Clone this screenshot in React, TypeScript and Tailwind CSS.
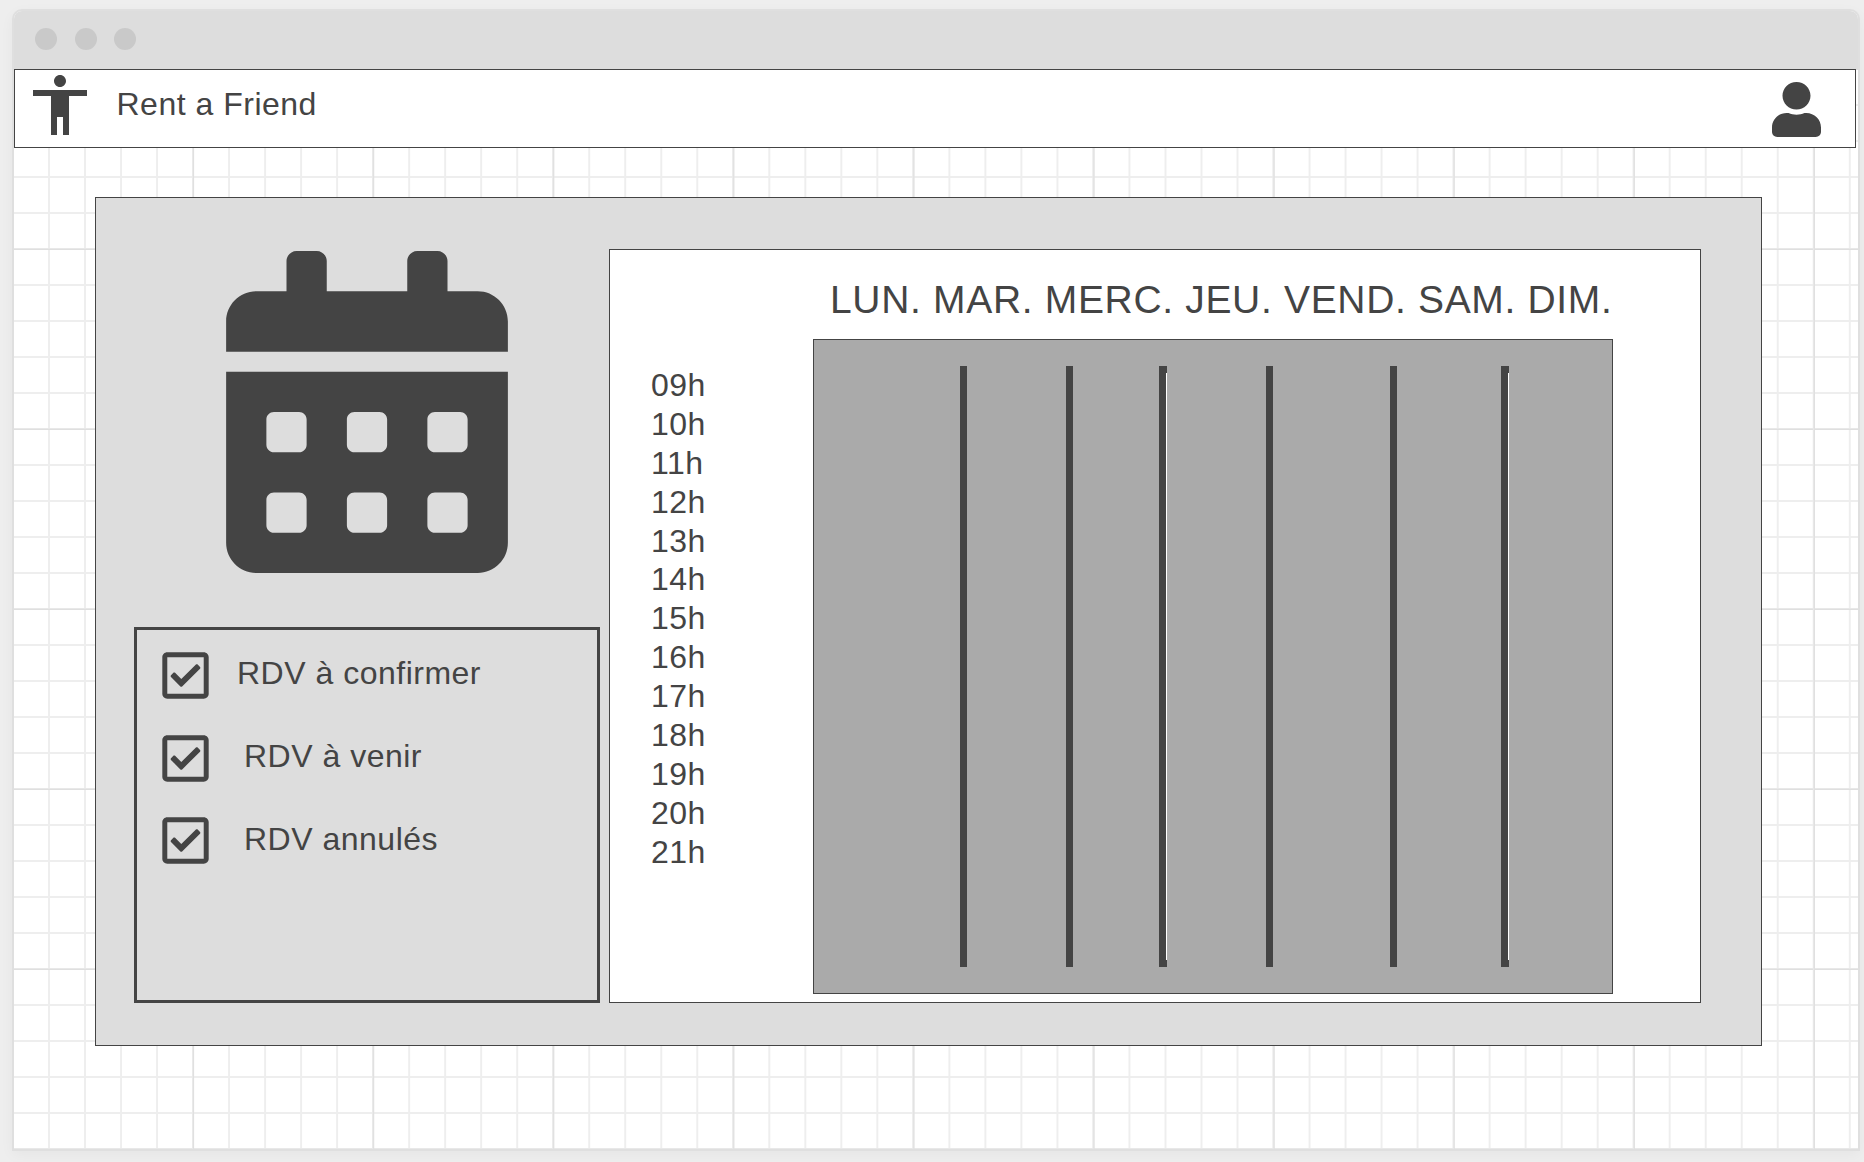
import { FaCalendarAlt, FaRegCheckSquare } from "react-icons/fa";
import { MdAccessibility } from "react-icons/md";

const hours = ["09h", "10h", "11h", "12h", "13h", "14h", "15h", "16h", "17h", "18h", "19h", "20h", "21h"];

const filters = [
  { label: "RDV à confirmer", row: "mb-[36px]", text: "ml-[28px] -mt-[3px]" },
  { label: "RDV à venir", row: "mb-[35px]", text: "ml-[35px] -mt-[3px]" },
  { label: "RDV annulés", row: "", text: "ml-[35px] -mt-px" },
];

const separators = [
  { space: "ml-[146px] w-[7px]", edge: false },
  { space: "ml-[99px] w-[7px]", edge: false },
  { space: "ml-[86px] w-[8px]", edge: true },
  { space: "ml-[99px] w-[7px]", edge: false },
  { space: "ml-[117px] w-[7px]", edge: false },
  { space: "ml-[104px] w-[8px]", edge: true },
];

function UserIcon() {
  return (
    <svg className="h-[55px] w-[49px]" viewBox="0 0 448 512" preserveAspectRatio="none" fill="currentColor">
      <path d="M224 256c70.7 0 128-57.3 128-128S294.7 0 224 0 96 57.3 96 128s57.3 128 128 128zm89.6 32h-16.7c-22.2 10.2-46.9 16-72.9 16s-50.6-5.8-72.9-16h-16.7C60.2 288 0 348.2 0 422.4V464c0 26.5 21.5 48 48 48h352c26.5 0 48-21.5 48-48v-41.6c0-74.2-60.2-134.4-134.4-134.4z" />
    </svg>
  );
}

function Header() {
  return (
    <header className="flex h-[79px] w-[1842px] border border-[#444] bg-white">
      <MdAccessibility className="-mt-px ml-[9px] size-[72px] shrink-0" />
      <h1 className="ml-[20.5px] mt-[16px] text-[32px] leading-[36px] tracking-[0.5px]">Rent a Friend</h1>
      <div className="ml-auto mr-[34px] mt-[12px] flex w-[50px] justify-center">
        <UserIcon />
      </div>
    </header>
  );
}

function Sidebar() {
  return (
    <aside className="ml-[38px] mt-[53px] flex w-[466px] flex-col">
      <FaCalendarAlt className="ml-[92px] h-[322px] w-[282px]" />
      <div className="mt-[54px] flex h-[376px] flex-col border-[3px] border-[#444] pl-[25px] pt-[21px]">
        {filters.map((f) => (
          <div key={f.label} className={`flex h-[47px] items-center ${f.row}`}>
            <FaRegCheckSquare className="mt-px h-[53px] w-[47px] shrink-0" />
            <span className={`text-[32px] leading-[36px] tracking-[0.5px] [font-feature-settings:'liga'] ${f.text}`}>
              {f.label}
            </span>
          </div>
        ))}
      </div>
    </aside>
  );
}

function Schedule() {
  return (
    <section className="ml-[9px] mt-[51px] flex h-[754px] w-[1092px] border border-[#444] bg-white">
      <ul className="ml-[41px] mt-[115.88px] w-[162px] text-[32px] leading-[38.91px] tracking-[0.5px]">
        {hours.map((h) => (
          <li key={h}>{h}</li>
        ))}
      </ul>
      <div className="flex flex-col">
        <p className="ml-[17px] mt-[27px] h-[62px] whitespace-nowrap text-[39px] leading-[46px] tracking-[0.67px]">
          LUN. MAR. MERC. JEU. VEND. SAM. DIM.
        </p>
        <div className="flex h-[655px] w-[800px] border border-[#444] bg-[#aaa] pt-[26px]">
          {separators.map((s, i) => (
            <div key={i} className={`flex h-[601px] justify-end bg-[#444] ${s.space}`}>
              {s.edge && <span className="my-[7px] w-px bg-white" />}
            </div>
          ))}
        </div>
      </div>
    </section>
  );
}

export default function App() {
  return (
    <div className="h-[1162px] w-[1864px] overflow-hidden bg-[#eee] pl-[12px] pt-[9px] font-['Liberation_Sans',Arial,sans-serif] text-[#444]">
      <div className="h-[1142px] w-[1848px] overflow-hidden rounded-t-[10px] border-2 border-[#dfdfdf] bg-white shadow-[0_4px_14px_rgba(0,0,0,0.04)]">
        <div className="flex h-[58px] items-center gap-[17.5px] bg-[#ddd] pb-[3px] pl-[21px]">
          <span className="size-[22px] rounded-full bg-[#c9c9c9]" />
          <span className="size-[22px] rounded-full bg-[#c9c9c9]" />
          <span className="size-[22px] rounded-full bg-[#c9c9c9]" />
        </div>
        <div className="h-[1080px] bg-[linear-gradient(to_right,#e8e8e8_1px,#dfdfdf_1px,#dfdfdf_2px,transparent_2px),linear-gradient(to_bottom,#e8e8e8_1px,#dfdfdf_1px,#dfdfdf_2px,transparent_2px),linear-gradient(to_right,#eee_2px,transparent_2px),linear-gradient(to_bottom,#eee_2px,transparent_2px)] bg-[position:-2px_-1px] bg-[size:180.1px_180px,180.1px_180px,36.02px_36px,36.02px_36px]">
          <Header />
          <main className="ml-[81px] mt-[49px] flex h-[849px] w-[1667px] border border-[#444] bg-[#ddd]">
            <Sidebar />
            <Schedule />
          </main>
        </div>
      </div>
    </div>
  );
}
